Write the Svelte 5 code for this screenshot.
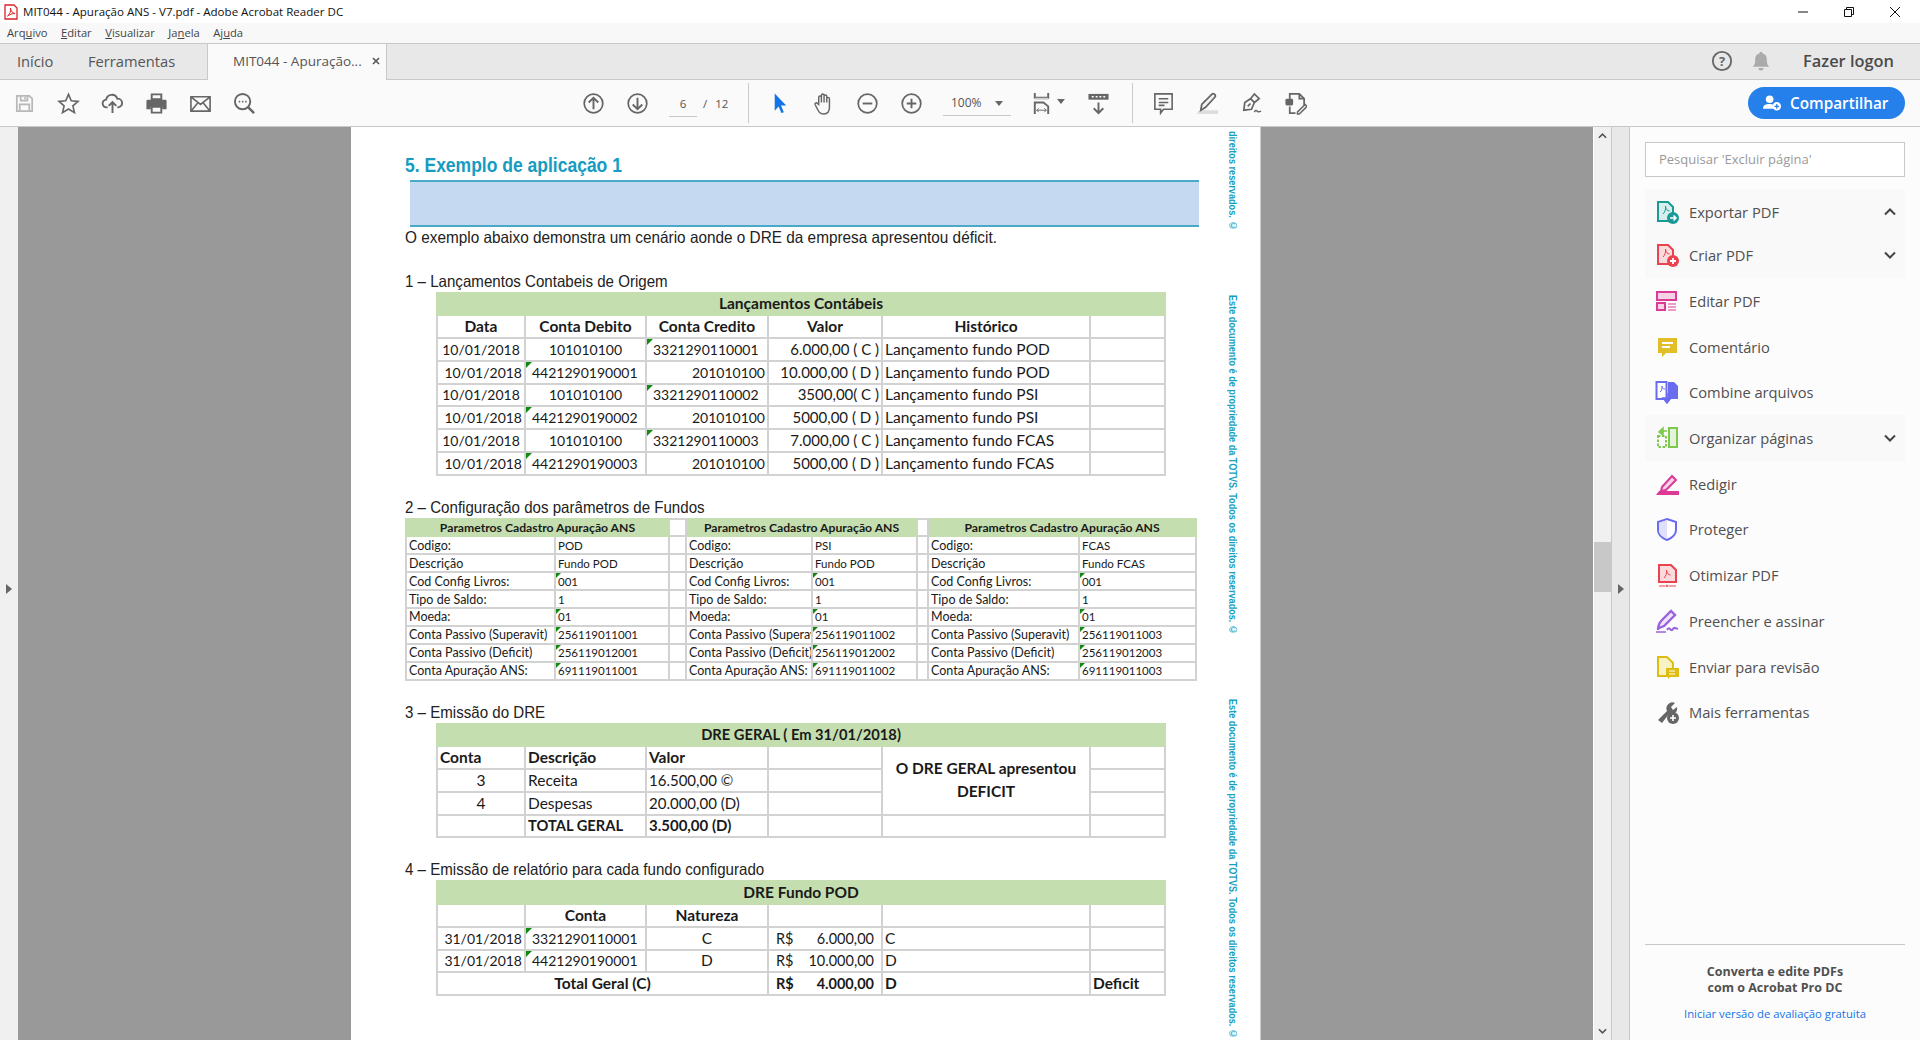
<script>
  const toolsLeft = [
    { c: '#b8b8b8', i: '<path d="M4 4h13l3 3v13H4z M8 4v5h7V4 M12.500 5.500v2 M7 20v-7h10v7" fill="none" stroke="currentColor" stroke-width="1.800"/>' },
    { c: '#666', i: '<path d="M12 2.500l2.900 6.600 7.100.7-5.400 4.700 1.600 7L12 17.800l-6.200 3.700 1.600-7L2 9.800l7.100-.7z" fill="none" stroke="currentColor" stroke-width="1.700"/>' },
    { c: '#666', i: '<path d="M7 16H6a4 4 0 0 1-.6-8A6 6 0 0 1 17 7a4.500 4.500 0 0 1 1 9h-1 M12 22V11 M8 14.500l4-4 4 4" fill="none" stroke="currentColor" stroke-width="2"/>' },
    { c: '#666', i: '<path d="M7 2.500h10v5H7z" fill="none" stroke="currentColor" stroke-width="2"/><path d="M3 8h18a1.500 1.500 0 0 1 1.500 1.500V18H18v-3H6v3H1.500V9.500A1.500 1.500 0 0 1 3 8z" fill="currentColor"/><path d="M7 15.500h10v6H7z" fill="none" stroke="currentColor" stroke-width="2"/>' },
    { c: '#666', i: '<path d="M2 5h20v15H2z M2 5l10 8 10-8 M2 20l7.500-9 M22 20l-7.500-9" fill="none" stroke="currentColor" stroke-width="1.700"/>' },
    { c: '#666', i: '<circle cx="10" cy="10" r="8" fill="none" stroke="currentColor" stroke-width="2"/><path d="M16 16l6 6" stroke="currentColor" stroke-width="2.600"/><path d="M6 10h1.500M9.300 10h1.500M12.600 10h1.500" stroke="currentColor" stroke-width="1.800"/>' }
  ];
  const circ = (inner) => `<circle cx="12" cy="12" r="9.700" fill="none" stroke="currentColor" stroke-width="1.800"/><path d="${inner}" fill="none" stroke="currentColor" stroke-width="2"/>`;
  const tools = [
    { n: 'Exportar PDF', ch: 'up', bg: true, i: '<path d="M3 2h10l5 5v14H3z" fill="#d6eeec" stroke="#1a9a96" stroke-width="2"/><path d="M8 14c2-2 3-5 2.500-8 0 3 2 5 4 5" fill="none" stroke="#1a9a96" stroke-width="1"/><circle cx="18" cy="18" r="6" fill="#1a9a96"/><path d="M15 18h6M18.500 15.500L21 18l-2.500 2.500" fill="none" stroke="#fff" stroke-width="1.500"/>' },
    { n: 'Criar PDF', ch: 'down', bg: true, i: '<path d="M3 2h10l5 5v14H3z" fill="#fadadd" stroke="#e8434e" stroke-width="2"/><path d="M8 14c2-2 3-5 2.500-8 0 3 2 5 4 5" fill="none" stroke="#e8434e" stroke-width="1"/><circle cx="18" cy="18" r="6" fill="#e8434e"/><path d="M15 18h6M18 15v6" stroke="#fff" stroke-width="1.800"/>' },
    { n: 'Editar PDF', i: '<path d="M2 3h19v8H2z M2 14h8v7H2z" fill="#f6d2e6" stroke="#dc3a96" stroke-width="2"/><path d="M13 15h8M13 18h8M13 21h8" stroke="#dc3a96" stroke-width="1.200"/>' },
    { n: 'Comentário', i: '<path d="M3 3h19v15H11l-4 4v-4H3z" fill="#e2bf28"/><path d="M7 8h11M7 12h8" stroke="#fff" stroke-width="1.800"/>' },
    { n: 'Combine arquivos', i: '<path d="M1.500 2h10v17h-10z" fill="#fff" stroke="#6a6cf0" stroke-width="2"/><path d="M13 2h6l4 4v13h-10z" fill="#6a6cf0"/><path d="M5 12c2-1 2-4 2-6 0 2 1 3 3 3" fill="none" stroke="#6a6cf0"/><path d="M12 13v7M8 18l4 5 4-5z" fill="#6a6cf0" stroke="#6a6cf0" stroke-width="1.500"/>' },
    { n: 'Organizar páginas', ch: 'down', bg: true, i: '<path d="M14 2h8v19h-8z" fill="#e4f3da" stroke="#7cc94e" stroke-width="2"/><path d="M3 10h8v11H3z" fill="none" stroke="#7cc94e" stroke-width="2" stroke-dasharray="2.500 1.500"/><path d="M12 5H7M8 2L4 6l4 3z" fill="#7cc94e" stroke="#7cc94e" stroke-width="1.500"/>' },
    { n: 'Redigir', i: '<path d="M7 15L17 4l4 4-10 10-5 1z" fill="#f6d2e6" stroke="#dc3a96" stroke-width="2"/><path d="M1 23l3-4h20v4z" fill="#dc3a96"/>' },
    { n: 'Proteger', i: '<path d="M12 2l9 3v8c0 5-4 8-9 10-5-2-9-5-9-10V5z" fill="#fff" stroke="#6a6cf0" stroke-width="2"/><path d="M12 3v19c-4-2-8-4-8-9V6z" fill="#dfe0fc"/>' },
    { n: 'Otimizar PDF', i: '<path d="M4 2h12l5 5v12H4z" fill="#fadadd" stroke="#e8434e" stroke-width="2"/><path d="M9 15c2-2 3-5 2.500-8 0 3 2 5 4 5" fill="none" stroke="#e8434e" stroke-width="1"/><path d="M4 23h6M14 23h7" stroke="#e8434e"/><circle cx="12" cy="23" r="1" fill="none" stroke="#e8434e"/>' },
    { n: 'Preencher e assinar', i: '<path d="M3 21c0-5 2-8 4-10l9-9 4 4-11 11-5 2" fill="#efe6fa" stroke="#9a62dc" stroke-width="2.400"/><path d="M12 21c1-2 2-2 3-1s2 2 3 0 3-1 5 0" fill="none" stroke="#9a62dc" stroke-width="2"/><path d="M1 23h10" stroke="#9a62dc" stroke-width="1.500"/>' },
    { n: 'Enviar para revisão', i: '<path d="M3 2h9l6 6v13H3z" fill="#f9f2c4" stroke="#dfbd10" stroke-width="2"/><path d="M11 13h13v9h-9l-2 2v-2h-2z" fill="#dfbd10"/><path d="M14 16h6M14 19h6" stroke="#fff" stroke-width="1.200"/>' },
    { n: 'Mais ferramentas', i: '<path d="M3 20L12 11a6 6 0 0 1 8-8l-4 4 2 3 4-3a6 6 0 0 1-8 7l-7 9z" fill="#666"/><circle cx="18" cy="18" r="6" fill="#666"/><path d="M15 18h6M18 15v6" stroke="#fff" stroke-width="1.600"/>' }
  ];
  const menu = [['Arq','u','ivo'],['','E','ditar'],['','V','isualizar'],['Ja','n','ela'],['Aj','u','da']];
  const t1 = [
    ['10/01/2018','101010100','3321290110001','6.000,00 ( C )','Lançamento fundo POD',0],
    ['10/01/2018','4421290190001','201010100','10.000,00 ( D )','Lançamento fundo POD',1],
    ['10/01/2018','101010100','3321290110002','3500,00( C )','Lançamento fundo PSI',0],
    ['10/01/2018','4421290190002','201010100','5000,00 ( D )','Lançamento fundo PSI',1],
    ['10/01/2018','101010100','3321290110003','7.000,00 ( C )','Lançamento fundo FCAS',0],
    ['10/01/2018','4421290190003','201010100','5000,00 ( D )','Lançamento fundo FCAS',1]
  ];
  const t2 = [
    ['Codigo:','POD','PSI','FCAS',0],
    ['Descrição','Fundo POD','Fundo POD','Fundo FCAS',0],
    ['Cod Config Livros:','001','001','001',1],
    ['Tipo de Saldo:','1','1','1',0],
    ['Moeda:','01','01','01',1],
    ['Conta Passivo (Superavit)','256119011001','256119011002','256119011003',1],
    ['Conta Passivo (Deficit)','256119012001','256119012002','256119012003',1],
    ['Conta Apuração ANS:','691119011001','691119011002','691119011003',1]
  ];
  const marks = [
    { cls: 'm1', t: 'direitos reservados. ©' },
    { cls: 'm2', t: 'Este documento é de propriedade da TOTVS. Todos os direitos reservados. ©' },
    { cls: 'm3', t: 'Este documento é de propriedade da TOTVS. Todos os direitos reservados. ©' }
  ];
</script>

<div class="app">
  <header class="title">
    <svg class="logo" viewBox="0 0 14 16"><path d="M1 1h9l3 3v11H1z" fill="#fff" stroke="#d8232a" stroke-width="1.300"/><path d="M3.500 12c2.500-1.500 3.500-5 3-8 0 3 2 5 4.500 5.500-3 0-5 1-7.500 2.500z" fill="none" stroke="#d8232a"/></svg>
    <span class="title-text">MIT044 - Apuração ANS - V7.pdf - Adobe Acrobat Reader DC</span>
    <div class="win">
      <svg viewBox="0 0 12 12"><path d="M1 6h10" stroke="#111"/></svg>
      <svg viewBox="0 0 12 12"><path d="M1.500 3.500h7v7h-7z M3.500 3.500v-2h7v7h-2" fill="none" stroke="#111"/></svg>
      <svg viewBox="0 0 12 12"><path d="M1 1l10 10M11 1L1 11" stroke="#111"/></svg>
    </div>
  </header>
  <nav class="menu">
    {#each menu as m}<span>{m[0]}<u>{m[1]}</u>{m[2]}</span>{/each}
  </nav>
  <div class="tabs">
    <span class="tab">Início</span>
    <span class="tab ferr">Ferramentas</span>
    <div class="tab-active"><span>MIT044 - Apuração...</span><svg viewBox="0 0 8 8"><path d="M1 1l6 6M7 1L1 7" stroke="#555" stroke-width="1.600"/></svg></div>
    <div class="tabs-right">
      <svg class="help" viewBox="0 0 24 24"><circle cx="12" cy="12" r="10" fill="none" stroke="#666" stroke-width="2"/><text x="12" y="17" text-anchor="middle" font-size="14" font-weight="700" fill="#666" font-family="Open Sans">?</text></svg>
      <svg class="bell" viewBox="0 0 24 24"><path d="M12 1a2 2 0 0 1 2 2c4 1 5 4 5 8 0 4 1 6 3 8H2c2-2 3-4 3-8 0-4 1-7 5-8a2 2 0 0 1 2-2z M9 20.500h6a3 3 0 0 1-6 0z" fill="#aaa"/></svg>
      <span class="logon">Fazer logon</span>
    </div>
  </div>
  <div class="toolbar">
    <div class="group left">
      {#each toolsLeft as t}<span class="ib" style="color:{t.c}"><svg viewBox="0 0 24 24">{@html t.i}</svg></span>{/each}
    </div>
    <div class="group nav-g">
      <span class="ib"><svg viewBox="0 0 24 24">{@html circ('M12 18V6.500M7 11l5-5 5 5')}</svg></span>
      <span class="ib"><svg viewBox="0 0 24 24">{@html circ('M12 6v11.500M7 13l5 5 5-5')}</svg></span>
      <div class="pager"><span class="pg">6</span><span class="sl">/</span><span class="tot">12</span></div>
      <i class="sep"></i>
      <span class="ib first"><svg viewBox="0 0 24 24"><path d="M7 1.500v18l4-4.500 3 7 2.500-1-3-7H19z" fill="#1473e6"/></svg></span>
      <span class="ib"><svg viewBox="0 0 24 24"><path d="M7 13V5.500a1.400 1.400 0 0 1 2.800 0V11V3.500a1.400 1.400 0 0 1 2.800 0V11V4.500a1.400 1.400 0 0 1 2.800 0V11V7a1.400 1.400 0 0 1 2.800 0v9c0 4-2 7-6 7s-5-2-7-6l-2-4c-.6-1.500 1.500-2.500 2.500-1z" fill="none" stroke="currentColor" stroke-width="1.500"/></svg></span>
      <span class="ib"><svg viewBox="0 0 24 24">{@html circ('M7 12h10')}</svg></span>
      <span class="ib"><svg viewBox="0 0 24 24">{@html circ('M7 12h10M12 7v10')}</svg></span>
      <div class="zoomv"><span>100%</span><i class="caret"></i></div>
      <span class="ib fit"><svg viewBox="0 0 24 24"><path d="M5 1v5h14V1" fill="none" stroke="currentColor" stroke-width="2"/><path d="M5 7h14" stroke="#ccc" stroke-width="2"/><path d="M5 23V11h9l5 4v8" fill="none" stroke="currentColor" stroke-width="2"/><path d="M7 19h10M7 19l2-2M7 19l2 2M17 19l-2-2M17 19l-2 2" stroke="currentColor" fill="none"/></svg><i class="caret"></i></span>
      <span class="ib dl"><svg viewBox="0 0 24 24"><path d="M1.500 2h21v6h-21z" fill="currentColor"/><path d="M5 5h2M9 5h2M13 5h2M17 5h2" stroke="#fff" stroke-width="1.500"/><path d="M12 11v11M7 17l5 5 5-5" fill="none" stroke="currentColor" stroke-width="2"/></svg></span>
      <i class="sep s-two"></i>
      <span class="ib"><svg viewBox="0 0 24 24"><path d="M3 2h18v16h-9l-3 4v-4H3z M7 7h10M7 11h10M7 14h6" fill="none" stroke="currentColor" stroke-width="1.700"/></svg></span>
      <span class="ib"><svg viewBox="0 0 24 24"><path d="M1 23h22v-4H3z" fill="#ddd"/><path d="M6 13L17 2c1-1 4 1 3 3L10 16l-5 3z" fill="#f3f3f3" stroke="currentColor" stroke-width="1.800"/></svg></span>
      <span class="ib"><svg viewBox="0 0 24 24"><path d="M4 19l1-8 6-4 4 4-3 7-8 1zM8 15l3-3M11 7l4-5 5 5-5 4" fill="none" stroke="currentColor" stroke-width="1.800"/><path d="M15 21c1-2 2-2 3-1s2 1 4 0" fill="none" stroke="currentColor" stroke-width="1.500"/></svg></span>
      <span class="ib"><svg viewBox="0 0 24 24"><path d="M6 8V2h10l5 5v7 M16 2v5h5 M6 15v7h6" fill="none" stroke="currentColor" stroke-width="1.800"/><rect x="1.500" y="7" width="8" height="7" rx="1.500" fill="currentColor"/><path d="M14 21l8-8 2 2-8 8h-2z" fill="none" stroke="currentColor" stroke-width="1.500"/></svg></span>
    </div>
    <button class="share">
      <svg viewBox="0 0 20 18"><circle cx="7" cy="5" r="4" fill="#fff"/><path d="M0 15c0-4 3-5 7-5 2 0 3 .4 4 1.200V15z" fill="#fff"/><circle cx="14.500" cy="12.500" r="4.500" fill="#fff"/><path d="M12 12.500h5M14.500 10v5" stroke="#2680eb" stroke-width="1.300"/></svg>
      Compartilhar
    </button>
  </div>
  <div class="viewer">
    <div class="lstrip"><i class="tri-r"></i></div>
    <main class="doc">
      <article class="page">
        {#each marks as m}<span class="mark {m.cls}">{m.t}</span>{/each}
        <h1>5. Exemplo de aplicação 1</h1>
        <div class="band"></div>
        <p class="intro">O exemplo abaixo demonstra um cenário aonde o DRE da empresa apresentou déficit.</p>
        <p class="sec">1 – Lançamentos Contabeis de Origem</p>
        <table class="xl">
          <colgroup><col class="c1"><col class="c2"><col class="c3"><col class="c4"><col class="c5"><col class="c6"></colgroup>
          <tbody>
          <tr class="g"><td colspan="6">Lançamentos Contábeis</td></tr>
          <tr class="b ctr"><td>Data</td><td>Conta Debito</td><td>Conta Credito</td><td>Valor</td><td>Histórico</td><td></td></tr>
          {#each t1 as r}
            <tr>
              <td class="n {r[5] ? 'r' : 'ctr'}">{r[0]}</td>
              <td class="n {r[5] ? 'mk pad' : 'ctr'}">{r[1]}</td>
              <td class="n {r[5] ? 'r' : 'mk pad'}">{r[2]}</td>
              <td class="r v">{r[3]}</td>
              <td>{r[4]}</td>
              <td></td>
            </tr>
          {/each}
          </tbody>
        </table>
        <p class="sec">2 – Configuração dos parâmetros de Fundos</p>
        <table class="xl small">
          <colgroup><col class="p1"><col class="p2"><col class="p3"><col class="p4"><col class="p5"><col class="p6"><col class="p7"><col class="p8"></colgroup>
          <tbody>
          <tr class="g">
            <td colspan="2">Parametros Cadastro Apuração ANS</td><td class="w"></td>
            <td colspan="2">Parametros Cadastro Apuração ANS</td><td class="w"></td>
            <td colspan="2">Parametros Cadastro Apuração ANS</td>
          </tr>
          {#each t2 as r}
            <tr>
              <td class="lab">{r[0]}</td><td class={r[4] ? 'mk val' : 'val'}>{r[1]}</td><td></td>
              <td class="lab">{r[0]}</td><td class={r[4] ? 'mk val' : 'val'}>{r[2]}</td><td></td>
              <td class="lab">{r[0]}</td><td class={r[4] ? 'mk val' : 'val'}>{r[3]}</td>
            </tr>
          {/each}
          </tbody>
        </table>
        <p class="sec">3 – Emissão do DRE</p>
        <table class="xl">
          <colgroup><col class="c1"><col class="c2"><col class="c3"><col class="c4"><col class="c5"><col class="c6"></colgroup>
          <tbody>
          <tr class="g"><td colspan="6" class="tight">DRE GERAL ( Em 31/01/2018)</td></tr>
          <tr class="b"><td>Conta</td><td>Descrição</td><td>Valor</td><td></td><td rowspan="3" class="ctr merged">O DRE GERAL apresentou<br>DEFICIT</td><td></td></tr>
          <tr><td class="ctr">3</td><td>Receita</td><td class="v">16.500,00 ©</td><td></td><td></td></tr>
          <tr><td class="ctr">4</td><td>Despesas</td><td class="v">20.000,00 (D)</td><td></td><td></td></tr>
          <tr class="b"><td></td><td class="tight">TOTAL GERAL</td><td class="v">3.500,00 (D)</td><td></td><td></td><td></td></tr>
          </tbody>
        </table>
        <p class="sec">4 – Emissão de relatório para cada fundo configurado</p>
        <table class="xl">
          <colgroup><col class="c1"><col class="c2"><col class="c3"><col class="c4"><col class="c5"><col class="c6"></colgroup>
          <tbody>
          <tr class="g"><td colspan="6">DRE Fundo POD</td></tr>
          <tr class="b ctr"><td></td><td>Conta</td><td>Natureza</td><td></td><td></td><td></td></tr>
          <tr><td class="n r">31/01/2018</td><td class="n mk pad">3321290110001</td><td class="ctr">C</td><td class="money"><span>R$</span><span>6.000,00</span></td><td>C</td><td></td></tr>
          <tr><td class="n r">31/01/2018</td><td class="n mk pad">4421290190001</td><td class="ctr">D</td><td class="money"><span>R$</span><span>10.000,00</span></td><td>D</td><td></td></tr>
          <tr class="b"><td colspan="3" class="ctr">Total Geral (C)</td><td class="money"><span>R$</span><span>4.000,00</span></td><td>D</td><td>Deficit</td></tr>
          </tbody>
        </table>
      </article>
    </main>
    <div class="scroll">
      <svg class="sa" viewBox="0 0 10 6"><path d="M1 5l4-4 4 4" fill="none" stroke="#555" stroke-width="1.800"/></svg>
      <div class="thumb"></div>
      <svg class="sa end" viewBox="0 0 10 6"><path d="M1 1l4 4 4-4" fill="none" stroke="#555" stroke-width="1.800"/></svg>
    </div>
    <div class="pstrip"><i class="tri-r"></i></div>
    <aside class="panel">
      <div class="search">Pesquisar 'Excluir página'</div>
      <ul>
        {#each tools as t}
          <li class:bg={t.bg}>
            <svg class="ti" viewBox="0 0 24 24">{@html t.i}</svg>
            <span>{t.n}</span>
            {#if t.ch}
              <svg class="chev" viewBox="0 0 12 8"><path d={t.ch === 'up' ? 'M1 6.500l5-5 5 5' : 'M1 1.500l5 5 5-5'} fill="none" stroke="#444" stroke-width="2"/></svg>
            {/if}
          </li>
        {/each}
      </ul>
      <div class="promo">
        <strong>Converta e edite PDFs<br>com o Acrobat Pro DC</strong>
        <span>Iniciar versão de avaliação gratuita</span>
      </div>
    </aside>
  </div>
</div>

<style>
  :global(body) { margin: 0; overflow: hidden; background: #fff; }
  .app { width: 1920px; height: 1040px; display: flex; flex-direction: column; overflow: hidden; font-family: "Open Sans", sans-serif; color: #4b4b4b; }

  .title { height: 23px; display: flex; align-items: center; padding-left: 4px; background: #fff; font-size: 11.550px; color: #111; flex: none; }
  .logo { width: 14px; height: 16px; margin-right: 5px; }
  .title-text { white-space: nowrap; }
  .win { margin-left: auto; display: flex; gap: 34px; padding-right: 19px; }
  .win svg { width: 12px; height: 12px; }

  .menu { height: 20px; box-sizing: border-box; padding-bottom: 2px; flex: none; display: flex; gap: 13.500px; align-items: center; padding-left: 7px; background: #f8f8f8; font-size: 11.200px; color: #444; }

  .tabs { height: 35px; flex: none; display: flex; align-items: stretch; background: #e8e8e8; border-top: 1px solid #c8c8c8; border-bottom: 1px solid #c8c8c8; font-size: 14.700px; color: #555; }
  .tab { display: flex; align-items: center; padding: 0 0 2px 17px; width: 54px; }
  .tab.ferr { width: 119px; }
  .tab-active { width: 180px; margin-bottom: -1px; box-sizing: border-box; background: #fafafa; border-left: 1px solid #c8c8c8; border-right: 1px solid #c8c8c8; display: flex; align-items: center; padding: 0 0 2px 25px; gap: 10px; font-size: 13.500px; white-space: nowrap; }
  .tab-active svg { width: 8px; height: 8px; }
  .tabs-right { margin-left: auto; display: flex; align-items: center; padding: 0 26px 2px 0; }
  .help { width: 22px; height: 22px; margin-right: 18px; }
  .bell { width: 20px; height: 20px; margin-right: 32px; }
  .logon { font-weight: 600; font-size: 16.400px; color: #4b4b4b; }

  .toolbar { height: 46px; flex: none; display: flex; align-items: center; background: #fafafa; border-bottom: 1px solid #c8c8c8; color: #666; position: relative; }
  .group { display: flex; align-items: center; }
  .left { margin-left: 2px; }
  .nav-g { margin-left: 305px; }
  .ib { width: 44px; height: 32px; display: flex; align-items: center; justify-content: center; color: #666; position: relative; flex: none; }
  .ib svg { width: 23px; height: 23px; }
  .pager { width: 79px; height: 26px; display: flex; align-items: center; font-size: 11.500px; color: #555; margin-left: 10px; }
  .pg { width: 28px; text-align: center; border-bottom: 1px solid #c8c8c8; height: 26px; line-height: 27px; }
  .sl { margin-left: 6px; margin-right: 8px; }
  .sep { width: 1px; height: 40px; background: #ccc; margin-left: 0; }
  .first { margin-left: 8px; }
  .zoomv { width: 68px; height: 26px; margin-left: 10px; position: relative; display: flex; align-items: center; font-size: 12px; border-bottom: 1px solid #c8c8c8; box-sizing: border-box; padding-left: 8px; color: #555; }
  .zoomv .caret { position: absolute; left: 52px; top: 11px; }
  .caret { width: 0; height: 0; border-left: 4px solid transparent; border-right: 4px solid transparent; border-top: 5px solid #666; display: block; }
  .fit { margin-left: 8px; }
  .fit .caret { position: absolute; left: 38px; top: 12px; }
  .dl { margin-left: 13px; }
  .s-two { margin: 0 8px 0 12px; }
  .share { position: absolute; left: 1748px; top: 7px; width: 157px; height: 32px; border: 0; border-radius: 16px; background: #2680eb; color: #fff; font: 600 15.300px "Open Sans", sans-serif; display: flex; align-items: center; gap: 8px; padding: 0 0 0 15px; }
  .share svg { width: 19px; height: 18px; }

  .viewer { flex: 1; display: flex; min-height: 0; background: #999; }
  .lstrip { width: 18px; flex: none; background: #f0f0f0; display: flex; align-items: center; justify-content: center; }
  .tri-r { width: 0; height: 0; border-top: 5px solid transparent; border-bottom: 5px solid transparent; border-left: 6px solid #666; display: block; margin-top: 10px; }
  .doc { flex: 1; min-width: 0; background: #999; overflow: hidden; padding-left: 333px; }
  .page { width: 910px; height: 913px; box-sizing: border-box; background: #fff; position: relative; padding: 26px 0 0 54px; color: #222; font-family: "Liberation Sans", sans-serif; border-right: 1px solid #ccc; }
  h1 { margin: 0; font-size: 20px; line-height: 24px; color: #169cc0; font-weight: 700; transform: scaleX(.875); transform-origin: left center; white-space: nowrap; }
  .band { margin: 3px 0 0 5px; width: 789px; height: 47px; box-sizing: border-box; background: #c5d9f1; border-top: 2px solid #4aa8c8; border-bottom: 2px solid #4aa8c8; }
  p { margin: 0; font-size: 16.500px; line-height: 20px; color: #222; white-space: nowrap; transform-origin: left center; }
  .intro { transform: scaleX(.93); }
  .sec { margin-top: 22px; transform: translateY(-1px) scaleX(.915); }
  .intro + .sec { margin-top: 24.500px; }
  .xl { border-collapse: collapse; table-layout: fixed; width: 728px; margin-left: 31px; font-family: Lato, sans-serif; font-size: 15.500px; color: #1a1a1a; }
  .xl td { border: 2px solid #d2d2d2; height: 20.750px; padding: 0 2px; white-space: nowrap; overflow: hidden; line-height: 19px; position: relative; }
  .c1 { width: 88px; } .c2 { width: 121px; } .c3 { width: 122px; } .c4 { width: 114px; } .c5 { width: 208px; } .c6 { width: 75px; }
  .g td { background: #c4deaf; font-weight: 700; text-align: center; border-color: #c4deaf; }
  .b td { font-weight: 700; }
  .ctr, .ctr td { text-align: center; }
  .r { text-align: right; }
  .xl td.n { font-size: 14px; }
  .xl td.v { font-size: 15px; }
  .xl td.tight { font-size: 14.700px; }
  .pad { padding-left: 6px !important; }
  .mk::before { content: ""; position: absolute; left: 0; top: 0; border-top: 6px solid #128a12; border-right: 6px solid transparent; }
  .small .mk::before { border-top-width: 5px; border-right-width: 5px; }
  .merged { line-height: 23px !important; }
  .money { font-size: 14.500px; }
  .money > span:first-child { float: left; padding-left: 5px; }
  .money > span:last-child { float: right; padding-right: 5px; }

  .xl.small { width: 790px; margin-left: 0; font-size: 11.300px; }
  .small td { height: 15.900px; line-height: 15px; padding: 0 1px; }
  .small .g td { font-size: 12.200px; }
  .small td.lab { font-size: 12.500px; padding-left: 2px; }
  .small td.val { font-size: 11.500px; padding-left: 2px; }
  .small .g td.w { background: #fff; border-color: #d2d2d2; }
  .p1 { width: 149px; } .p2 { width: 114px; } .p3 { width: 17px; } .p4 { width: 126px; } .p5 { width: 105px; } .p6 { width: 11px; } .p7 { width: 151px; } .p8 { width: 117px; }

  .mark { position: absolute; left: 876px; writing-mode: vertical-rl; font: 700 11px "Liberation Sans", sans-serif; color: #18a0c0; white-space: nowrap; transform: scaleY(.83); transform-origin: top; }
  .m1 { top: 4px; }
  .m2 { top: 168px; }
  .m3 { top: 572px; }

  .scroll { width: 17px; flex: none; background: #f0f0f0; border-left: 1px solid #fff; position: relative; }
  .sa { position: absolute; left: 4px; top: 6px; width: 9px; height: 6px; }
  .sa.end { top: auto; bottom: 6px; }
  .thumb { position: absolute; left: 0; right: 0; top: 415px; height: 50px; background: #c8c8c8; }
  .pstrip { width: 17px; flex: none; background: #e8e8e8; border-left: 1px solid #c8c8c8; border-right: 1px solid #c8c8c8; display: flex; align-items: center; justify-content: center; }

  .panel { width: 290px; flex: none; background: #fcfcfc; position: relative; padding: 15px 15px 0; box-sizing: border-box; display: flex; flex-direction: column; }
  .search { height: 35px; box-sizing: border-box; border: 1px solid #c8c8c8; background: #fff; font-size: 13px; color: #999; line-height: 33px; padding-left: 13px; flex: none; }
  ul { list-style: none; margin: 12px 0 0; padding: 0; }
  li { height: 45.700px; display: flex; align-items: center; padding-left: 10px; font-size: 14.700px; color: #505050; position: relative; }
  li:first-child { height: 43.500px; box-sizing: border-box; padding-top: 2.500px; }
  li.bg { background: #f9f9f9; }
  .ti { width: 24px; height: 24px; margin-right: 10px; flex: none; }
  .chev { position: absolute; right: 9px; width: 12px; height: 8px; }
  .promo { margin-top: auto; border-top: 1px solid #c8c8c8; height: 96px; box-sizing: border-box; padding-top: 19px; text-align: center; display: flex; flex-direction: column; font-size: 13px; }
  .promo strong { font-weight: 700; line-height: 16px; font-size: 12.500px; color: #505050; }
  .promo span { color: #1473e6; margin-top: 10px; font-size: 11.300px; line-height: 16px; }
</style>
